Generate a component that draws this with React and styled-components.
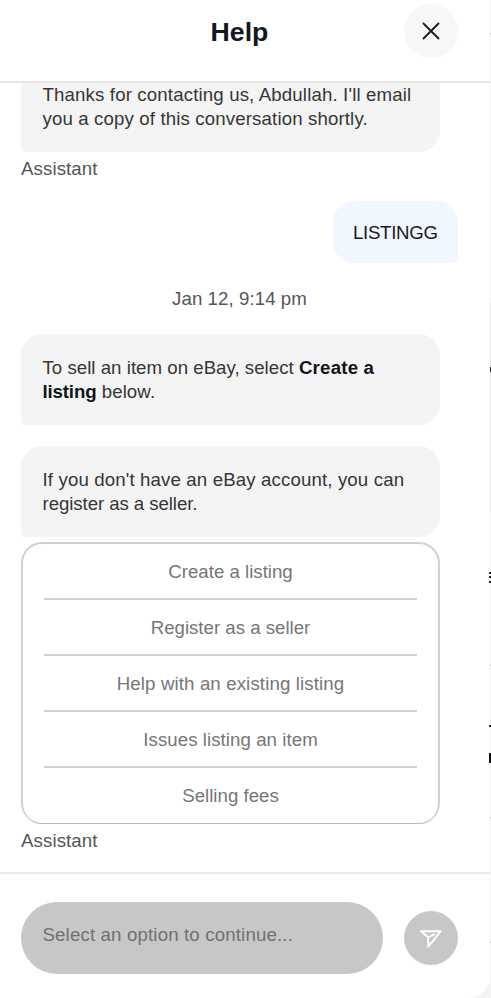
import styled, { createGlobalStyle } from 'styled-components';

const GlobalStyle = createGlobalStyle`
    * {
        box-sizing: border-box;
    }
    body {
        margin: 0;
        background: #f3f3f3;
        font-family: 'Liberation Sans', Arial, sans-serif;
        font-size: 18.67px;
        line-height: 24px;
        color: #363636;
    }
`;

const Page = styled.div`
    position: relative;
    height: 998px;
    overflow: hidden;
`;

const Panel = styled.section`
    display: flex;
    flex-direction: column;
    width: 490px;
    height: 998px;
    background: #fff;
    border-bottom-right-radius: 21px;
    overflow: hidden;
`;

const Header = styled.header`
    display: grid;
    grid-template-columns: 54px 1fr 54px;
    flex: none;
    height: 83px;
    padding: 4px 32px 0 21px;
    border-bottom: 2px solid #e8e8e8;
`;

const Title = styled.h1`
    grid-column: 2;
    margin: 11px 0 0;
    font-size: 26.67px;
    line-height: 34px;
    text-align: center;
    color: #111820;
`;

const CloseButton = styled.button`
    display: flex;
    align-items: center;
    justify-content: center;
    width: 54px;
    height: 54px;
    padding: 0;
    border: 0;
    border-radius: 50%;
    background: #f7f7f7;
`;

const Messages = styled.main`
    display: flex;
    flex: none;
    flex-direction: column;
    justify-content: flex-end;
    align-items: flex-start;
    height: 789px;
    padding: 0 32px 19px 21px;
    overflow: hidden;
`;

const Bubble = styled.div`
    flex: none;
    width: 419px;
    height: 91px;
    margin-top: ${(props) => props.$gap || 0}px;
    padding: 22px 20px 21px 21.5px;
    border-radius: 21px 21px 21px 5px;
    background: #f4f4f4;
`;

const Line = styled.span`
    display: block;
    white-space: nowrap;
    letter-spacing: ${(props) => props.$spacing || 0}px;

    & b {
        color: #0d1520;
        letter-spacing: ${(props) => props.$boldSpacing || 0}px;
    }
`;

const UserBubble = styled.div`
    align-self: flex-end;
    flex: none;
    width: 125px;
    height: 62px;
    margin: 20px 0 0;
    padding: 20px 0 0 20px;
    border-radius: 21px 21px 5px 21px;
    background: #f0f7ff;
    letter-spacing: -0.3px;
    color: #191919;
`;

const Sender = styled.span`
    flex: none;
    margin-top: 5px;
    letter-spacing: 0.1px;
    color: #555;
`;

const Timestamp = styled.time`
    align-self: center;
    flex: none;
    margin-top: 24px;
    letter-spacing: 0.07px;
    color: #555;
`;

const Options = styled.ul`
    flex: none;
    width: 419px;
    height: 282px;
    margin: 5px 0 0;
    padding: 0 21px;
    border: 2px solid #d0d0d0;
    border-bottom: 1px solid #bbb;
    border-radius: 21px;
    list-style: none;
`;

const Option = styled.li`
    height: 56px;
    padding-top: 16px;
    border-bottom: 2px solid #d0d0d0;
    letter-spacing: ${(props) => props.$spacing || 0}px;
    text-align: center;
    color: #767676;

    &:last-child {
        border-bottom: 0;
    }
`;

const Footer = styled.footer`
    display: flex;
    flex: 1;
    align-items: flex-start;
    gap: 21px;
    padding: 28px 32px 0 21px;
    border-top: 2px solid #ebebeb;
`;

const Input = styled.div`
    width: 362px;
    height: 72px;
    padding: 21px 21.5px;
    border-radius: 36px;
    background: #c7c7c7;
    letter-spacing: 0.15px;
    color: #707070;
`;

const SendButton = styled.button`
    display: flex;
    align-items: center;
    justify-content: center;
    width: 54px;
    height: 54px;
    margin-top: 9px;
    padding: 2px 0 0;
    border: 0;
    border-radius: 50%;
    background: #c7c7c7;
`;

// Sliver of the page that shows past the right side of the panel
const Edge = styled.div`
    position: absolute;
    top: ${(props) => props.$top}px;
    right: 0;
    width: ${(props) => props.$width || 1}px;
    height: ${(props) => props.$height || 2}px;
    background: ${(props) => props.$color || '#ccc'};
`;

const options = [
    { label: 'Create a listing' },
    { label: 'Register as a seller' },
    { label: 'Help with an existing listing', spacing: 0.12 },
    { label: 'Issues listing an item', spacing: 0.06 },
    { label: 'Selling fees' },
];

const edges = [
    { top: 33 },
    { top: 302, height: 210, color: '#e5e5e5' },
    { top: 367, height: 5, color: '#222' },
    { top: 572, color: '#222', width: 2 },
    { top: 576, color: '#222', width: 2 },
    { top: 581, color: '#222', width: 2 },
    { top: 664 },
    { top: 725, color: '#222', width: 2 },
    { top: 753, height: 10, color: '#111', width: 2 },
    { top: 817 },
    { top: 941 },
];

function App() {
    return (
        <Page>
            <GlobalStyle />
            <Panel>
                <Header>
                    <Title>Help</Title>
                    <CloseButton aria-label="Close">
                        <svg width="18" height="18" viewBox="0 0 18 18" fill="none">
                            <path
                                d="M1.5 1.5 16.5 16.5M16.5 1.5 1.5 16.5"
                                stroke="#191919"
                                strokeWidth="1.8"
                                strokeLinecap="round"
                            />
                        </svg>
                    </CloseButton>
                </Header>
                <Messages>
                    <Bubble>
                        <Line $spacing={0.14}>Thanks for contacting us, Abdullah. I'll email</Line>
                        <Line $spacing={0.13}>you a copy of this conversation shortly.</Line>
                    </Bubble>
                    <Sender>Assistant</Sender>
                    <UserBubble>LISTINGG</UserBubble>
                    <Timestamp>Jan 12, 9:14 pm</Timestamp>
                    <Bubble $gap={23}>
                        <Line $spacing={0.02} $boldSpacing={0.2}>
                            To sell an item on eBay, select <b>Create a</b>
                        </Line>
                        <Line $spacing={0.1} $boldSpacing={-0.15}>
                            <b>listing</b> below.
                        </Line>
                    </Bubble>
                    <Bubble $gap={21}>
                        <Line $spacing={0.13}>If you don't have an eBay account, you can</Line>
                        <Line $spacing={-0.08}>register as a seller.</Line>
                    </Bubble>
                    <Options>
                        {options.map((option) => (
                            <Option key={option.label} $spacing={option.spacing}>
                                {option.label}
                            </Option>
                        ))}
                    </Options>
                    <Sender>Assistant</Sender>
                </Messages>
                <Footer>
                    <Input>Select an option to continue...</Input>
                    <SendButton aria-label="Send">
                        <svg width="22" height="18" viewBox="0 0 22 18" fill="none">
                            <path
                                d="M1.2 1.2H20.8L8.4 16.6 8 7.2ZM8 7.2 14 4.6"
                                stroke="#fff"
                                strokeWidth="1.9"
                                strokeLinecap="round"
                                strokeLinejoin="round"
                            />
                        </svg>
                    </SendButton>
                </Footer>
            </Panel>
            {edges.map((edge) => (
                <Edge
                    key={edge.top}
                    $top={edge.top}
                    $height={edge.height}
                    $width={edge.width}
                    $color={edge.color}
                />
            ))}
        </Page>
    );
}

export default App;
